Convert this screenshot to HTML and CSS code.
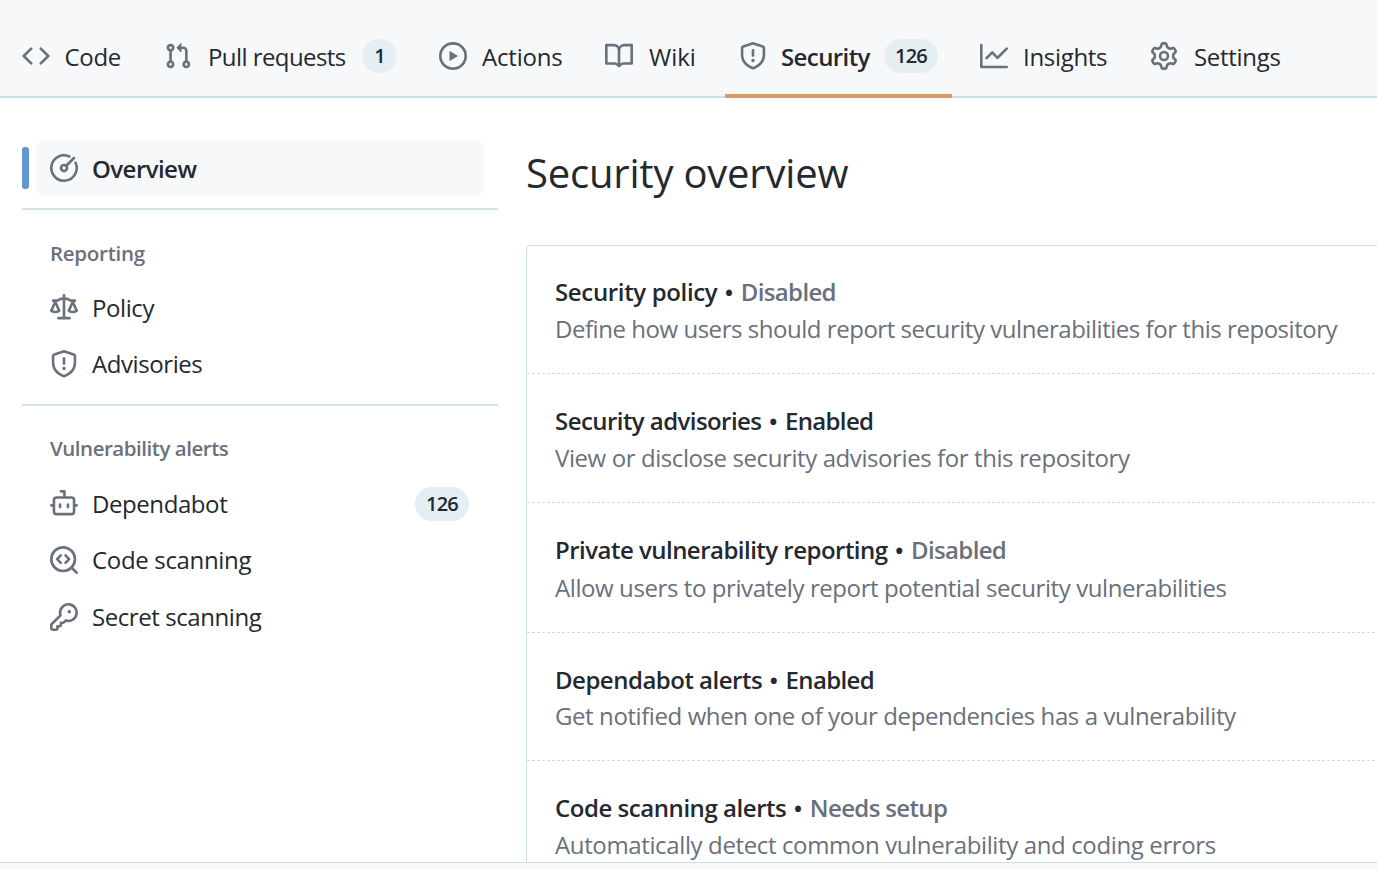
FILE: index.html
```html
<!DOCTYPE html>
<html lang="en">
<head>
<meta charset="utf-8">
<title>Security overview</title>
<link rel="stylesheet" href="styles.css">
</head>
<body>
<svg class="defs" width="0" height="0" aria-hidden="true">
  <symbol id="shield" viewBox="0 0 16 16"><path d="M7.467.133a1.748 1.748 0 0 1 1.066 0l5.25 1.68A1.75 1.75 0 0 1 15 3.48V7c0 1.566-.32 3.182-1.303 4.682-.983 1.498-2.585 2.813-5.032 3.855a1.697 1.697 0 0 1-1.33 0c-2.447-1.042-4.049-2.357-5.032-3.855C1.32 10.182 1 8.566 1 7V3.48a1.75 1.75 0 0 1 1.217-1.667Zm.61 1.429a.25.25 0 0 0-.153 0l-5.25 1.68a.25.25 0 0 0-.174.238V7c0 1.358.275 2.666 1.057 3.86.784 1.194 2.121 2.34 4.366 3.297a.196.196 0 0 0 .154 0c2.245-.956 3.582-2.104 4.366-3.298C13.225 9.666 13.5 8.36 13.5 7V3.48a.251.251 0 0 0-.174-.237l-5.25-1.68ZM8.75 4.75v3a.75.75 0 0 1-1.5 0v-3a.75.75 0 0 1 1.5 0ZM9 10.5a1 1 0 1 1-2 0 1 1 0 0 1 2 0Z"/></symbol>
</svg>
<nav class="tabs">
  <a class="tab tab-code"><svg class="icon" viewBox="0 0 16 16"><path d="m11.28 3.22 4.25 4.25a.75.75 0 0 1 0 1.06l-4.25 4.25a.749.749 0 0 1-1.275-.326.749.749 0 0 1 .215-.734L13.94 8l-3.72-3.72a.749.749 0 0 1 .326-1.275.749.749 0 0 1 .734.215Zm-6.56 0a.751.751 0 0 1 1.042.018.751.751 0 0 1 .018 1.042L2.06 8l3.72 3.72a.749.749 0 0 1-.326 1.275.749.749 0 0 1-.734-.215L.47 8.53a.75.75 0 0 1 0-1.06Z"/></svg><span>Code</span></a>
  <a class="tab tab-pulls"><svg class="icon" viewBox="0 0 16 16"><path d="M1.5 3.25a2.25 2.25 0 1 1 3 2.122v5.256a2.251 2.251 0 1 1-1.5 0V5.372A2.25 2.25 0 0 1 1.5 3.25Zm5.677-.177L9.573.677A.25.25 0 0 1 10 .854V2.5h1A2.5 2.5 0 0 1 13.5 5v5.628a2.251 2.251 0 1 1-1.5 0V5a1 1 0 0 0-1-1h-1v1.646a.25.25 0 0 1-.427.177L7.177 3.427a.25.25 0 0 1 0-.354ZM3.75 2.5a.75.75 0 1 0 0 1.5.75.75 0 0 0 0-1.5Zm0 9.5a.75.75 0 1 0 0 1.5.75.75 0 0 0 0-1.5Zm8.25.75a.75.75 0 1 0 1.5 0 .75.75 0 0 0-1.5 0Z"/></svg><span>Pull requests</span><b class="count">1</b></a>
  <a class="tab tab-actions"><svg class="icon" viewBox="0 0 16 16"><path d="M8 0a8 8 0 1 1 0 16A8 8 0 0 1 8 0ZM1.5 8a6.5 6.5 0 1 0 13 0 6.5 6.5 0 0 0-13 0Zm4.879-2.773 4.264 2.559a.25.25 0 0 1 0 .428l-4.264 2.559A.25.25 0 0 1 6 10.559V5.442a.25.25 0 0 1 .379-.215Z"/></svg><span>Actions</span></a>
  <a class="tab tab-wiki"><svg class="icon" viewBox="0 0 16 16"><path d="M0 1.75A.75.75 0 0 1 .75 1h4.253c1.227 0 2.317.59 3 1.501A3.743 3.743 0 0 1 11.006 1h4.245a.75.75 0 0 1 .75.75v10.5a.75.75 0 0 1-.75.75h-4.507a2.25 2.25 0 0 0-1.591.659l-.622.621a.75.75 0 0 1-1.06 0l-.622-.621A2.25 2.25 0 0 0 5.258 13H.75a.75.75 0 0 1-.75-.75Zm7.251 10.324.004-5.073-.002-2.253A2.25 2.25 0 0 0 5.003 2.5H1.5v9h3.757a3.75 3.75 0 0 1 1.994.574ZM8.755 4.75l-.004 7.322a3.752 3.752 0 0 1 1.992-.572H14.5v-9h-3.495a2.25 2.25 0 0 0-2.25 2.25Z"/></svg><span>Wiki</span></a>
  <a class="tab tab-security"><svg class="icon"><use href="#shield"/></svg><span>Security</span><b class="count">126</b></a>
  <a class="tab tab-insights"><svg class="icon" viewBox="0 0 16 16"><path d="M1.5 1.75V13.5h13.75a.75.75 0 0 1 0 1.5H.75a.75.75 0 0 1-.75-.75V1.75a.75.75 0 0 1 1.5 0Zm14.28 2.53-5.25 5.25a.75.75 0 0 1-1.06 0L7 7.06 4.28 9.78a.751.751 0 0 1-1.042-.018.751.751 0 0 1-.018-1.042l3.25-3.25a.75.75 0 0 1 1.06 0L10 7.94l4.72-4.72a.751.751 0 0 1 1.042.018.751.751 0 0 1 .018 1.042Z"/></svg><span>Insights</span></a>
  <a class="tab tab-settings"><svg class="icon" viewBox="0 0 16 16"><path d="M8 0a8.2 8.2 0 0 1 .701.031C9.444.095 9.99.645 10.16 1.29l.288 1.107c.018.066.079.158.212.224.231.114.454.243.668.386.123.082.233.09.299.071l1.103-.303c.644-.176 1.392.021 1.82.63.27.385.506.792.704 1.218.315.675.111 1.422-.364 1.891l-.814.806c-.049.048-.098.147-.088.294.016.257.016.515 0 .772-.01.147.038.246.088.294l.814.806c.475.469.679 1.216.364 1.891a7.977 7.977 0 0 1-.704 1.217c-.428.61-1.176.807-1.82.63l-1.102-.302c-.067-.019-.177-.011-.3.071a5.909 5.909 0 0 1-.668.386c-.133.066-.194.158-.211.224l-.29 1.106c-.168.646-.715 1.196-1.458 1.26a8.006 8.006 0 0 1-1.402 0c-.743-.064-1.289-.614-1.458-1.26l-.289-1.106c-.018-.066-.079-.158-.212-.224a5.738 5.738 0 0 1-.668-.386c-.123-.082-.233-.09-.299-.071l-1.103.303c-.644.176-1.392-.021-1.82-.63a8.12 8.12 0 0 1-.704-1.218c-.315-.675-.111-1.422.363-1.891l.815-.806c.05-.048.098-.147.088-.294a6.214 6.214 0 0 1 0-.772c.01-.147-.038-.246-.088-.294l-.815-.806C.635 6.045.431 5.298.746 4.623a7.92 7.92 0 0 1 .704-1.217c.428-.61 1.176-.807 1.82-.63l1.102.302c.067.019.177.011.3-.071.214-.143.437-.272.668-.386.133-.066.194-.158.211-.224l.29-1.106C6.009.645 6.556.095 7.299.03 7.53.01 7.764 0 8 0Zm-.571 1.525c-.036.003-.108.036-.137.146l-.289 1.105c-.147.561-.549.967-.998 1.189-.173.086-.34.183-.5.29-.417.278-.97.423-1.529.27l-1.103-.303c-.109-.03-.175.016-.195.045-.22.312-.412.644-.573.99-.014.031-.021.11.059.19l.815.806c.411.406.562.957.53 1.456a4.709 4.709 0 0 0 0 .582c.032.499-.119 1.05-.53 1.456l-.815.806c-.081.08-.073.159-.059.19.162.346.353.677.573.989.02.03.085.076.195.046l1.102-.303c.56-.153 1.113-.008 1.53.27.161.107.328.204.501.29.447.222.85.629.997 1.189l.289 1.105c.029.109.101.143.137.146a6.6 6.6 0 0 0 1.142 0c.036-.003.108-.036.137-.146l.289-1.105c.147-.561.549-.967.998-1.189.173-.086.34-.183.5-.29.417-.278.97-.423 1.529-.27l1.103.303c.109.029.175-.016.195-.045.22-.313.411-.644.573-.99.014-.031.021-.11-.059-.19l-.815-.806c-.411-.406-.562-.957-.53-1.456a4.709 4.709 0 0 0 0-.582c-.032-.499.119-1.05.53-1.456l.815-.806c.081-.08.073-.159.059-.19a6.464 6.464 0 0 0-.573-.989c-.02-.03-.085-.076-.195-.046l-1.102.303c-.56.153-1.113.008-1.53-.27a4.44 4.44 0 0 0-.501-.29c-.447-.222-.85-.629-.997-1.189l-.289-1.105c-.029-.11-.101-.143-.137-.146a6.6 6.6 0 0 0-1.142 0ZM11 8a3 3 0 1 1-6 0 3 3 0 0 1 6 0ZM9.5 8a1.5 1.5 0 1 0-3.001.001A1.5 1.5 0 0 0 9.5 8Z"/></svg><span>Settings</span></a>
</nav>
<div class="layout">
  <aside class="sidebar">
    <div class="current"><i class="marker"></i><a class="item selected"><svg class="icon" viewBox="0 0 16 16"><g fill="none" stroke="currentColor" stroke-width="1.5" stroke-linecap="round"><path d="M11 1.4A7.25 7.25 0 1 0 14.6 5"/><circle cx="8" cy="8" r="1.75"/><path d="M9.3 6.7 13.7 2.3"/></g></svg><span class="t-overview">Overview</span></a></div>
    <section class="group reporting">
      <h2 class="t-reporting">Reporting</h2>
      <a class="item"><svg class="icon" viewBox="0 0 16 16"><path d="M8.75.75V2h.985c.304 0 .603.08.867.231l1.29.736c.038.022.08.033.124.033h2.234a.75.75 0 0 1 0 1.5h-.427l2.111 4.692a.75.75 0 0 1-.154.838l-.53-.53.529.531-.001.002-.002.002-.006.006-.006.005-.01.01-.045.04c-.21.176-.441.327-.686.45C14.556 10.78 13.88 11 13 11a4.498 4.498 0 0 1-2.023-.454 3.544 3.544 0 0 1-.686-.45l-.045-.04-.016-.015-.006-.006-.004-.004v-.001a.75.75 0 0 1-.154-.838L12.178 4.5h-.162c-.305 0-.604-.079-.868-.231l-1.29-.736a.245.245 0 0 0-.124-.033H8.75V13h2.5a.75.75 0 0 1 0 1.5h-6.5a.75.75 0 0 1 0-1.5h2.5V3.5h-.984a.245.245 0 0 0-.124.033l-1.289.737c-.265.15-.564.23-.869.23h-.162l2.112 4.692a.75.75 0 0 1-.154.838l-.53-.53.529.531-.001.002-.002.002-.006.006-.016.015-.045.04c-.21.176-.441.327-.686.45C4.556 10.78 3.88 11 3 11a4.498 4.498 0 0 1-2.023-.454 3.544 3.544 0 0 1-.686-.45l-.045-.04-.016-.015-.006-.006-.004-.004v-.001a.75.75 0 0 1-.154-.838L2.178 4.5H1.75a.75.75 0 0 1 0-1.5h2.234a.249.249 0 0 0 .125-.033l1.288-.737c.265-.15.564-.23.869-.23h.984V.75a.75.75 0 0 1 1.5 0Zm2.945 8.477c.285.135.718.273 1.305.273s1.02-.138 1.305-.273L13 6.327Zm-10 0c.285.135.718.273 1.305.273s1.02-.138 1.305-.273L3 6.327Z"/></svg><span class="t-policy">Policy</span></a>
      <a class="item"><svg class="icon"><use href="#shield"/></svg><span class="t-advisories">Advisories</span></a>
    </section>
    <section class="group alerts">
      <h2 class="t-alerts">Vulnerability alerts</h2>
      <a class="item"><svg class="icon" viewBox="0 0 16 16"><path d="M5.75 7.5a.75.75 0 0 1 .75.75v1.5a.75.75 0 0 1-1.5 0v-1.5a.75.75 0 0 1 .75-.75Zm5.25.75a.75.75 0 0 0-1.5 0v1.5a.75.75 0 0 0 1.5 0v-1.5Z"/><path d="M6.25 0h2A.75.75 0 0 1 9 .75V3.5h3.25a2.25 2.25 0 0 1 2.25 2.25V8h.75a.75.75 0 0 1 0 1.5h-.75v2.75a2.25 2.25 0 0 1-2.25 2.25h-8.5a2.25 2.25 0 0 1-2.25-2.25V9.5H.75a.75.75 0 0 1 0-1.5h.75V5.75A2.25 2.25 0 0 1 3.75 3.5H7.5v-2H6.25a.75.75 0 0 1 0-1.5ZM3 5.75v6.5c0 .414.336.75.75.75h8.5a.75.75 0 0 0 .75-.75v-6.5a.75.75 0 0 0-.75-.75h-8.5a.75.75 0 0 0-.75.75Z"/></svg><span class="t-dependabot">Dependabot</span><b class="count">126</b></a>
      <a class="item"><svg class="icon" viewBox="0 0 16 16"><g fill="none" stroke="currentColor" stroke-width="1.5" stroke-linecap="round" stroke-linejoin="round"><circle cx="7.5" cy="7.5" r="6.75"/><path d="M12.4 12.4 15.25 15.25M6.1 5.4 4.1 7.5 6.1 9.6M8.9 5.4 10.9 7.5 8.9 9.6"/></g></svg><span class="t-codescan">Code scanning</span></a>
      <a class="item last"><svg class="icon" viewBox="0 0 16 16"><path d="M10.5 0a5.499 5.499 0 1 1-1.288 10.848l-.932.932a.749.749 0 0 1-.53.22H7v.75a.749.749 0 0 1-.22.53l-.5.5a.749.749 0 0 1-.53.22H5v.75a.749.749 0 0 1-.22.53l-.5.5a.749.749 0 0 1-.53.22h-2A1.75 1.75 0 0 1 0 14.25v-2c0-.199.079-.389.22-.53l4.932-4.932A5.5 5.5 0 0 1 10.5 0Zm-4 5.5c-.001.431.069.86.205 1.269a.75.75 0 0 1-.181.768L1.5 12.56v1.69c0 .138.112.25.25.25h1.69l.06-.06v-1.19a.75.75 0 0 1 .75-.75h1.19l.06-.06v-1.19a.75.75 0 0 1 .75-.75h1.19l1.023-1.025a.75.75 0 0 1 .768-.18A4 4 0 1 0 6.5 5.5ZM11 6a1 1 0 1 1 0-2 1 1 0 0 1 0 2Z"/></svg><span class="t-secret">Secret scanning</span></a>
    </section>
  </aside>
  <main class="main">
    <h1>Security overview</h1>
    <div class="box">
      <div class="row first"><h3><span class="h-a">Security policy</span><i class="dot"> • </i><em>Disabled</em></h3><p class="p-a">Define how users should report security vulnerabilities for this repository</p></div>
      <div class="row second"><h3><span class="h-b">Security advisories</span><i class="dot"> • </i><em class="on">Enabled</em></h3><p class="p-b">View or disclose security advisories for this repository</p></div>
      <div class="row third"><h3><span class="h-c">Private vulnerability reporting</span><i class="dot"> • </i><em>Disabled</em></h3><p class="p-c">Allow users to privately report potential security vulnerabilities</p></div>
      <div class="row fourth"><h3><span class="h-d">Dependabot alerts</span><i class="dot"> • </i><em class="on">Enabled</em></h3><p class="p-d">Get notified when one of your dependencies has a vulnerability</p></div>
      <div class="row fifth"><h3><span class="h-e">Code scanning alerts</span><i class="dot"> • </i><em>Needs setup</em></h3><p class="p-e">Automatically detect common vulnerability and coding errors</p></div>
    </div>
  </main>
</div>
<footer class="footer"></footer>
</body>
</html>
```
FILE: styles.css
```css
* { box-sizing: border-box; }
body {
  margin: 0;
  width: 1377px;
  height: 869px;
  overflow: hidden;
  display: flex;
  flex-direction: column;
  background: #fff;
  color: #24292f;
  font: 400 24px/36px "Open Sans", "Noto Sans", sans-serif;
  white-space: nowrap;
}
h1, h2, h3, p { margin: 0; }
.defs { display: none; }
.icon { width: 28px; height: 28px; flex: none; fill: currentColor; color: #6a707c; }
.count {
  flex: none;
  height: 34px;
  min-width: 35px;
  padding: 0 11px;
  border-radius: 17px;
  background: #e4eef3;
  font-size: 20px;
  font-weight: 600;
  line-height: 33px;
  letter-spacing: -0.8px;
  text-align: center;
}

/* Repository tabs */
.tabs {
  flex: none;
  display: flex;
  height: 98px;
  padding-left: 22px;
  background: #f6f8fa;
  border-bottom: 2px solid #c9dee8;
}
.tab { flex: none; display: flex; align-items: center; height: 98px; padding-top: 14px; }
.tab span { padding-top: 2px; }
.tab .icon { margin-right: 15px; }
.tab .count { margin-left: auto; }
.tab-code { width: 142px; letter-spacing: -0.3px; }
.tab-code .icon { margin-right: 14.5px; }
.tab-pulls { width: 233px; margin-right: 42px; letter-spacing: -0.57px; }
.tab-pulls .icon { margin-right: 16px; }
.tab-actions { width: 166px; letter-spacing: -0.2px; }
.tab-wiki { width: 120px; }
.tab-wiki .icon { margin-right: 16px; }
.tab-security {
  width: 227px;
  margin-right: 28px;
  padding: 18px 14px 0;
  border-bottom: 4px solid #da9a6c;
  font-weight: 600;
  letter-spacing: -0.6px;
}
.tab-security .icon { margin-right: 14px; }
.tab-insights { width: 170px; letter-spacing: -0.3px; }
.tab-settings { letter-spacing: -0.3px; }
.tab-settings .icon { margin-right: 16px; }

/* Sidebar */
.layout { flex: 1; min-height: 0; display: flex; overflow: hidden; padding-left: 22px; }
.sidebar { flex: none; width: 476px; padding-top: 42px; }
.current { display: flex; align-items: center; gap: 7px; padding-bottom: 12px; }
.marker { width: 7px; height: 42px; border-radius: 3px; background: #6097d2; }
.item { display: flex; align-items: center; height: 56px; padding-left: 28px; padding-right: 29px; letter-spacing: -0.42px; }
.item .icon { margin-right: 14px; }
.item .count { margin-left: auto; }
.selected { width: 448px; padding-left: 14px; border-radius: 10px; background: #f6f8fa; font-weight: 600; }
.t-overview { padding-top: 2px; letter-spacing: -0.55px; }
.t-codescan { letter-spacing: -0.33px; }
.group { border-top: 2px solid #d3e3eb; }
.group h2 { padding-left: 28px; font-size: 20.5px; font-weight: 600; line-height: 30px; letter-spacing: -0.47px; color: #6a707c; }
.group h2.t-reporting { letter-spacing: -0.28px; }
.reporting { height: 196px; padding-top: 28px; }
.reporting h2 { margin-bottom: 12px; }
.alerts { padding-top: 27px; }
.alerts h2 { margin-bottom: 13px; }
.last { height: 58px; }

/* Feature list */
.main { flex: none; width: 860px; margin-left: 28px; padding-top: 43px; }
h1 { height: 104px; font-size: 40px; font-weight: 400; line-height: 64px; letter-spacing: -0.2px; }
.box { height: 640px; border: 1px solid #c9dee8; border-top-left-radius: 5px; }
.row { height: 128px; padding: 28px 0 0 28px; border-bottom: 1px dashed #c9dee8; }
.row h3 { font-size: 24px; font-weight: 600; line-height: 37px; }
.row p { font-size: 24px; line-height: 37px; letter-spacing: -0.41px; color: #6a707c; }
.row em { font-style: normal; letter-spacing: -0.65px; color: #6a707c; }
.row em.on { color: #24292f; }
.dot { margin: 0 1px; font-style: normal; white-space: pre; }
.first { padding-top: 27px; }
.second { height: 129px; }
.third { height: 130px; }
.third h3 { line-height: 38px; }
.fourth { padding-top: 29px; }
.fourth h3 { line-height: 35px; }
.h-a { letter-spacing: -0.35px; }
.h-b { letter-spacing: -0.56px; }
.h-c { letter-spacing: -0.52px; }
.h-d { letter-spacing: -0.5px; }
.h-e { letter-spacing: -0.45px; }
.row .p-a { letter-spacing: -0.46px; }
.row .p-e { letter-spacing: -0.37px; }
.footer { flex: none; height: 7px; background: #f6f8fa; border-top: 1px solid #c9dee8; }
```
